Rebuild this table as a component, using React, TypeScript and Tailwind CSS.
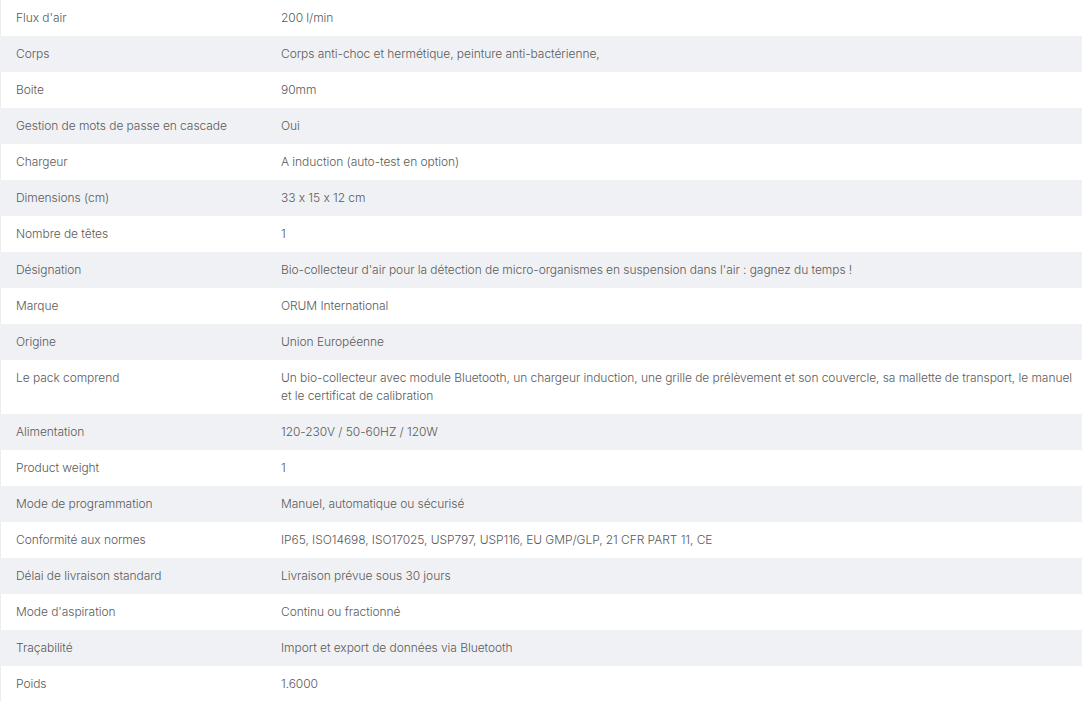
import React from "react";

const rows: [string, string][] = [
  ["Flux d'air", "200 l/min"],
  ["Corps", "Corps anti-choc et hermétique, peinture anti-bactérienne,"],
  ["Boite", "90mm"],
  ["Gestion de mots de passe en cascade", "Oui"],
  ["Chargeur", "A induction (auto-test en option)"],
  ["Dimensions (cm)", "33 x 15 x 12 cm"],
  ["Nombre de têtes", "1"],
  ["Désignation", "Bio-collecteur d'air pour la détection de micro-organismes en suspension dans l'air : gagnez du temps !"],
  ["Marque", "ORUM International"],
  ["Origine", "Union Européenne"],
  ["Le pack comprend", "Un bio-collecteur avec module Bluetooth, un chargeur induction, une grille de prélèvement et son couvercle, sa mallette de transport, le manuel et le certificat de calibration"],
  ["Alimentation", "120-230V / 50-60HZ / 120W"],
  ["Product weight", "1"],
  ["Mode de programmation", "Manuel, automatique ou sécurisé"],
  ["Conformité aux normes", "IP65, ISO14698, ISO17025, USP797, USP116, EU GMP/GLP, 21 CFR PART 11, CE"],
  ["Délai de livraison standard", "Livraison prévue sous 30 jours"],
  ["Mode d'aspiration", "Continu ou fractionné"],
  ["Traçabilité", "Import et export de données via Bluetooth"],
  ["Poids", "1.6000"],
];

export default function App() {
  return (
    <div
      className="w-[1082px] bg-white text-[12px] leading-[18px] font-light tracking-[-0.06px] text-[#5a5a5a] [font-feature-settings:'calt'_0]"
      style={{ fontFamily: "Inter, 'Noto Sans', sans-serif" }}
    >
      {rows.map(([k, v], i) => (
        <div
          key={k}
          className={`flex ${i % 2 === 1 ? "bg-[#f0f1f4]" : "bg-white shadow-[inset_1px_0_0_#ececec]"}`}
        >
          <div className="w-[265px] shrink-0 px-4 py-[9px]">{k}</div>
          <div className="flex-1 pl-4 pr-1 py-[9px]">{v}</div>
        </div>
      ))}
    </div>
  );
}
